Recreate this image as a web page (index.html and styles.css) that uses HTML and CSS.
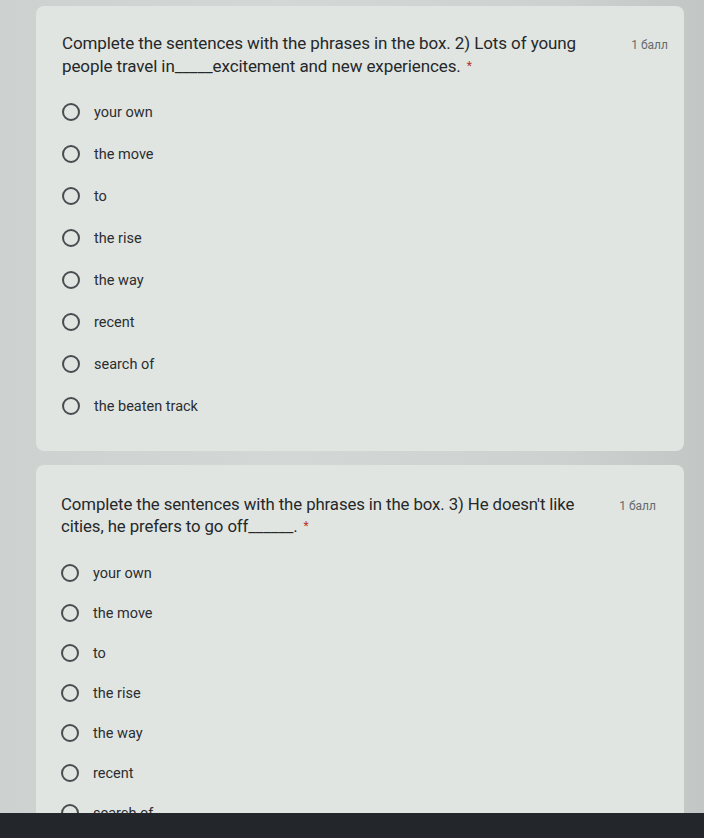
FILE: index.html
```html
<!DOCTYPE html>
<html lang="ru">
<head>
<meta charset="utf-8">
<title>Form</title>
<link rel="stylesheet" href="styles.css">
</head>
<body>
<main class="page">
  <section class="card card--near">
    <div class="head">
      <div class="question">Complete the sentences with the phrases in the box. 2) Lots of young people travel in_____excitement and new experiences. <span class="req">*</span></div>
      <div class="points">1 балл</div>
    </div>
    <ul class="options">
      <li class="option"><span class="radio"></span><span>your own</span></li>
      <li class="option"><span class="radio"></span><span>the move</span></li>
      <li class="option"><span class="radio"></span><span>to</span></li>
      <li class="option"><span class="radio"></span><span>the rise</span></li>
      <li class="option"><span class="radio"></span><span>the way</span></li>
      <li class="option"><span class="radio"></span><span>recent</span></li>
      <li class="option"><span class="radio"></span><span>search of</span></li>
      <li class="option"><span class="radio"></span><span>the beaten track</span></li>
    </ul>
  </section>
  <section class="card card--far">
    <div class="head">
      <div class="question">Complete the sentences with the phrases in the box. 3) He doesn't like cities, he prefers to go off______. <span class="req">*</span></div>
      <div class="points">1 балл</div>
    </div>
    <ul class="options">
      <li class="option"><span class="radio"></span><span>your own</span></li>
      <li class="option"><span class="radio"></span><span>the move</span></li>
      <li class="option"><span class="radio"></span><span>to</span></li>
      <li class="option"><span class="radio"></span><span>the rise</span></li>
      <li class="option"><span class="radio"></span><span>the way</span></li>
      <li class="option"><span class="radio"></span><span>recent</span></li>
      <li class="option"><span class="radio"></span><span>search of</span></li>
      <li class="option"><span class="radio"></span><span>the beaten track</span></li>
    </ul>
  </section>
</main>
<div class="taskbar"></div>
</body>
</html>
```
FILE: styles.css
```css
html, body {
  margin: 0;
  padding: 0;
}
body {
  background: linear-gradient(90deg, #cdd1d0 0%, #d3d7d6 40%, #cdd2d1 80%, #c2c7c6 100%);
  font-family: Roboto, "Noto Sans", Arial, sans-serif;
  color: #26282a;
  height: 838px;
  overflow: hidden;
}
.page {
  padding: 6px 20px 0 36px;
  display: flex;
  flex-direction: column;
  gap: 14px;
}
.card {
  background: #e0e5e1;
  border-radius: 8px;
}
.card--near {
  padding: 26px 16px 24px 26px;
  box-sizing: border-box;
  height: 445px;
}
.card--far {
  padding: 28px 28px 0 25px;
  height: 400px;
}
.head {
  display: flex;
  align-items: flex-start;
}
.question {
  flex: 1;
  font-size: 17px;
  line-height: 23px;
  letter-spacing: -0.1px;
}
.card--far .question {
  font-size: 16.8px;
  line-height: 22px;
}
.req {
  color: #b8322a;
  font-size: 12px;
  vertical-align: top;
  margin-left: 2px;
}
.points {
  flex: none;
  margin-left: 46px;
  font-size: 12px;
  line-height: 23px;
  color: #666b6e;
  padding-top: 2px;
}
.card--far .points {
  margin-left: 32px;
}
.options {
  list-style: none;
  margin: 13px 0 0;
  padding: 0;
}
.card--far .options {
  margin-top: 16px;
}
.option {
  display: flex;
  align-items: center;
  height: 42px;
  font-size: 14.5px;
  color: #2b2d30;
}
.card--far .option {
  height: 40px;
}
.radio {
  width: 14px;
  height: 14px;
  border: 2px solid #4a4d50;
  border-radius: 50%;
  margin-right: 14px;
  flex: none;
}
.taskbar {
  position: fixed;
  left: 0;
  right: 0;
  bottom: 0;
  height: 25px;
  background: #23272b;
}
```
